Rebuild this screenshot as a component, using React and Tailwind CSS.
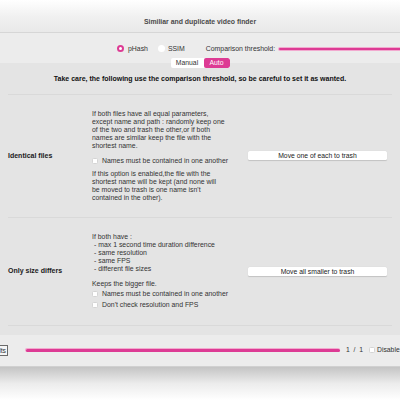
const pink = 'bg-[#dd3b94]';

const Checkbox = ({ label }) => (
  <div className="flex items-center gap-[4px]">
    <span className="w-[6px] h-[6px] rounded-[1.5px] bg-white border border-[#d4d4d4] shrink-0" />
    <span className="whitespace-nowrap">{label}</span>
  </div>
);

const Section = ({ label, children, button, className }) => (
  <div className={`flex items-center border-b border-[#d9d9d9] ${className}`}>
    <div className="w-[84px] shrink-0 font-bold text-[#1a1a1a] text-[7px]">{label}</div>
    <div className="w-[148px] shrink-0 flex flex-col whitespace-nowrap">{children}</div>
    <div className="flex-1 pl-[8px] pr-[5px]">
      <button className="w-full h-[9px] bg-white rounded-[1.5px] shadow-[0_0.5px_1px_rgba(0,0,0,0.15)] text-[6.8px] text-[#222] leading-[9px]">
        {button}
      </button>
    </div>
  </div>
);

export default function App() {
  return (
    <div
      className="w-[400px] h-[400px] overflow-hidden bg-white flex flex-col text-[#2a2a2a]"
      style={{ fontFamily: '"Liberation Sans", Arial, sans-serif' }}
    >
      {/* title bar */}
      <div className="h-[33px] shrink-0 bg-gradient-to-b from-white via-[#f1f1f1] to-[#e9e9e9] border-b border-[#d6d6d6] flex items-end justify-center pb-[5px]">
        <span className="text-[6.9px] font-bold text-[#4a4a4a]">Similiar and duplicate video finder</span>
      </div>

      {/* toolbar */}
      <div className="h-[30px] shrink-0 bg-[#ececec] flex items-center pt-[2px] text-[6.9px] text-[#333]">
        <div className="w-[117px] shrink-0" />
        <div className="flex items-center gap-[4px]">
          <span className="w-[7px] h-[7px] rounded-full border-[2px] border-[#dd3b94] bg-white" />
          <span>pHash</span>
        </div>
        <div className="flex items-center gap-[3px] ml-[10px]">
          <span className="w-[7px] h-[7px] rounded-full bg-white" />
          <span>SSIM</span>
        </div>
        <span className="ml-[21px]">Comparison threshold:</span>
        <div className="ml-[3px] flex-1 -mr-[4px] h-[4px] rounded-full bg-[#f2a9cf] flex items-center px-[0.5px]">
          <div className={`w-full h-[2px] rounded-full ${pink}`} />
        </div>
      </div>

      {/* content */}
      <div className="flex-1 bg-[#e4e4e4] flex flex-col">
        <div className="flex justify-center -mt-[5px]">
          <div className="flex h-[10px] rounded-[2px] bg-white text-[6.8px] leading-[10px] overflow-hidden">
            <span className="w-[33px] text-center text-[#333]">Manual</span>
            <span className={`w-[26px] text-center text-white rounded-[2px] ${pink}`}>Auto</span>
          </div>
        </div>
        <div className="text-center font-bold text-[7px] text-[#111] mt-[6px]">
          Take care, the following use the comparison threshold, so be careful to set it as wanted.
        </div>
        <div className="mx-[8px] mt-[9px] border-t border-[#d9d9d9]" />

        <div className="mx-[8px] flex flex-col text-[6.9px] leading-[8px] text-[#333]">
          <Section label="Identical files" button="Move one of each to trash" className="h-[123px]">
            <p>
              If both files have all equal parameters,<br />
              except name and path : randomly keep one<br />
              of the two and trash the other,or if both<br />
              names are similar keep the file with the<br />
              shortest name.
            </p>
            <div className="mt-[7px] mb-[5px]">
              <Checkbox label="Names must be contained in one another" />
            </div>
            <p>
              If this option is enabled,the file with the<br />
              shortest name will be kept (and none will<br />
              be moved to trash is one name isn't<br />
              contained in the other).
            </p>
          </Section>
          <Section label="Only size differs" button="Move all smaller to trash" className="h-[108px]">
            <p>If both have :</p>
            <p className="pl-[2px]">- max 1 second time duration difference</p>
            <p className="pl-[2px]">- same resolution</p>
            <p className="pl-[2px]">- same FPS</p>
            <p className="pl-[2px]">- different file sizes</p>
            <p className="mt-[7px]">Keeps the bigger file.</p>
            <div className="mt-[2px] flex flex-col gap-[3px]">
              <Checkbox label="Names must be contained in one another" />
              <Checkbox label="Don't check resolution and FPS" />
            </div>
          </Section>
        </div>

        <div className="h-[9px]" />
        {/* bottom bar */}
        <div className="h-[32px] bg-[#ececec] border-b border-[#d0d0d0] flex items-center text-[6.8px] text-[#333]">
          <button className="-ml-[40px] w-[48px] h-[11px] border border-[#6a6a6a] bg-[#f6f6f6] text-right pr-[1px] leading-[9px]">
            Results
          </button>
          <div className="ml-[17px] w-[315px] h-[4px] rounded-full bg-[#f2a9cf] flex items-center px-[0.5px]">
            <div className={`w-full h-[3px] rounded-full ${pink}`} />
          </div>
          <span className="ml-[6px]">1&nbsp;&nbsp;/&nbsp;&nbsp;1</span>
          <span className="ml-[6px] w-[6px] h-[6px] rounded-[1.5px] bg-white border border-[#d4d4d4]" />
          <span className="ml-[2px]">Disable</span>
        </div>
      </div>

      {/* shadow below window */}
      <div className="h-[33px] shrink-0 bg-gradient-to-b from-[#c4c4c4] via-[#ececec] to-white" />
    </div>
  );
}
